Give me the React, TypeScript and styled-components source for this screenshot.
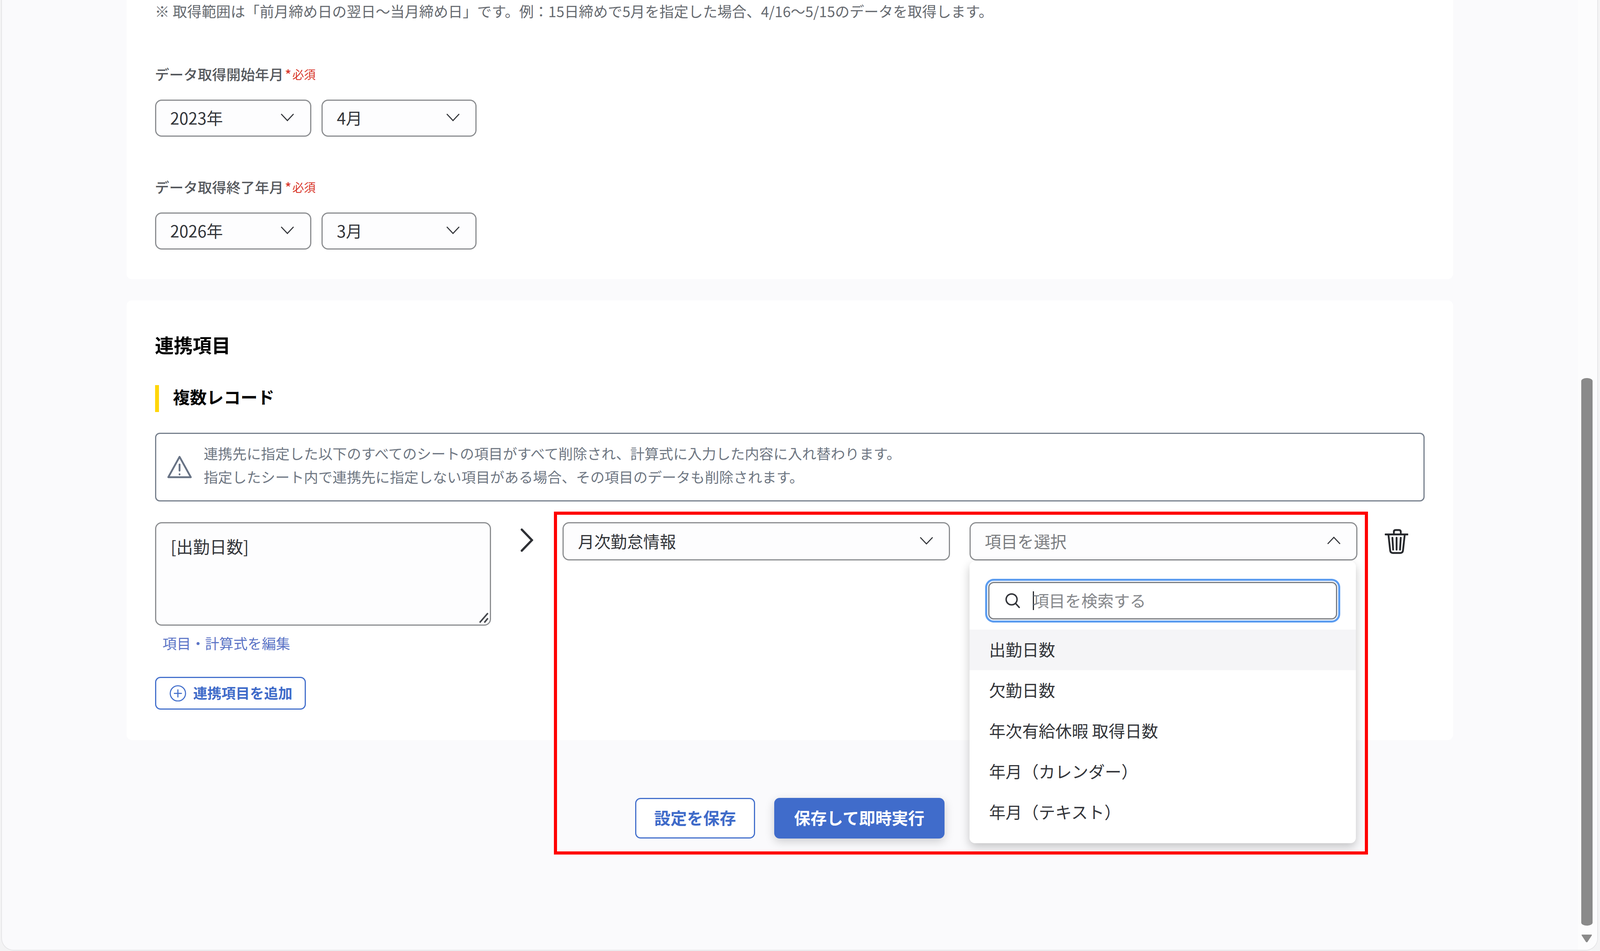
import React from 'react'
import styled, { createGlobalStyle } from 'styled-components'

// sizes measured on the 4400px wide design, kept fluid with the window width
const vw = (n: number) => `${(n / 44).toFixed(4)}vw`

const GlobalStyle = createGlobalStyle`
   * {
      box-sizing: border-box;
   }
   html, body {
      margin: 0;
      padding: 0;
      background-color: #f3f3f4;
   }
   body {
      font-family: "Noto Sans CJK JP", "Noto Sans", sans-serif;
   }
`

const Screen = styled.div`
   position: relative;
   width: 100vw;
   height: 2435px;
   overflow: hidden;
   padding: 0 ${vw(8)} 3px ${vw(5)};
`
const Window = styled.div`
   position: relative;
   height: 100%;
   overflow: hidden;
   background-color: #fafafc;
   border-radius: 0 0 30px 30px;
   box-shadow: 0 0 0 2px #e6e6e8;
`
const Main = styled.main`
   width: ${vw(3648)};
   margin-left: ${vw(343)};
`
const Card = styled.section`
   background-color: #ffffff;
   padding: 0 ${vw(78)};
   border-radius: 0 0 14px 14px;
`
const RangeCard = styled(Card)`
   padding-bottom: 76px;
`
const FieldCard = styled(Card)`
   margin-top: 54px;
   padding-top: 86px;
   padding-bottom: 78px;
   border-radius: 14px;
`
const Note = styled.p`
   margin: 0;
   padding-bottom: 6px;
   font-size: ${vw(39.9)};
   line-height: 56px;
   white-space: nowrap;
   color: #666a70;
`
const Field = styled.div<{ $top: number }>`
   margin-top: ${p => p.$top}px;
`
const Label = styled.div`
   display: flex;
   align-items: center;
   height: 60px;
   margin-bottom: 34px;
   padding-bottom: 4px;
   font-size: ${vw(39.3)};
   font-weight: 500;
   color: #55585d;
`
const Star = styled.span`
   margin-left: ${vw(4)};
   font-size: ${vw(36)};
   color: #d9382c;
`
const Required = styled.span`
   margin-left: ${vw(3)};
   font-size: ${vw(32)};
   font-weight: 400;
   color: #d9382c;
`
const SelectRow = styled.div`
   display: flex;
   gap: ${vw(28)};
`
const SelectBox = styled.div<{ $w?: number; $h?: number; $muted?: boolean }>`
   display: flex;
   align-items: center;
   justify-content: space-between;
   width: ${p => (p.$w ? vw(p.$w) : '100%')};
   height: ${p => p.$h ?? 95}px;
   padding: 0 ${vw(43)} 4px ${vw(39)};
   background-color: #fdfdfe;
   border: 3px solid #8b8d90;
   border-radius: 17px;
   font-size: ${vw(45)};
   color: ${p => (p.$muted ? '#7a7c80' : '#33353a')};
`
const Chevron = styled.svg`
   flex: 0 0 auto;
   width: ${vw(38)};
   height: ${vw(22)};
   fill: none;
   stroke: #33353a;
   stroke-width: 3;
`
const Title = styled.h2`
   margin: 0;
   font-size: ${vw(52)};
   line-height: 54px;
   padding-bottom: 6px;
   font-weight: 700;
   color: #000000;
`
const SubTitle = styled.h3`
   display: flex;
   align-items: center;
   height: 69px;
   margin: 71px 0 0;
   padding: 0 0 12px ${vw(39)};
   border-left: ${vw(11)} solid #ffd60a;
   font-size: ${vw(46.5)};
   font-weight: 700;
   color: #000000;
`
const Alert = styled.div`
   display: flex;
   align-items: center;
   height: 176px;
   margin-top: 53px;
   padding-left: ${vw(31)};
   border: 3px solid #767f8c;
   border-radius: 12px;
   gap: ${vw(32)};
`
const AlertIcon = styled.svg`
   flex: 0 0 auto;
   width: ${vw(68)};
   height: ${vw(64)};
   fill: none;
   stroke: #687385;
   stroke-width: 5;
   stroke-linejoin: round;
   stroke-linecap: round;
`
const AlertText = styled.div`
   padding-bottom: 12px;
   font-size: ${vw(39.4)};
   line-height: 60px;
   color: #6f7783;
`
const Mapping = styled.div`
   display: flex;
   align-items: flex-start;
   margin-top: 53px;
`
const SourceCol = styled.div`
   flex: 0 0 ${vw(924)};
`
const Formula = styled.div`
   position: relative;
   height: 265px;
   padding: 28px ${vw(40)};
   background-color: #fdfdfe;
   border: 3px solid #8b8d90;
   border-radius: 17px;
   font-size: ${vw(46)};
   line-height: 60px;
   color: #33353a;
`
const Grip = styled.svg`
   position: absolute;
   right: 3px;
   bottom: 3px;
   width: 28px;
   height: 28px;
   fill: none;
   stroke: #44474c;
   stroke-width: 4;
`
const EditLink = styled.a`
   display: block;
   margin-top: 14px;
   padding-left: ${vw(21)};
   font-size: ${vw(39)};
   line-height: 60px;
   color: #5b74c6;
`
const AddButton = styled.button`
   display: flex;
   align-items: center;
   gap: ${vw(19)};
   width: ${vw(415)};
   height: 84px;
   margin-top: 57px;
   padding: 0 0 4px ${vw(37)};
   background-color: #ffffff;
   border: 3px solid #4470cc;
   border-radius: 14px;
   font-family: inherit;
   font-size: ${vw(39)};
   font-weight: 700;
   white-space: nowrap;
   color: #3f6bc9;
`
const PlusIcon = styled.svg`
   flex: 0 0 auto;
   width: ${vw(46)};
   height: ${vw(46)};
   margin-top: 4px;
   fill: none;
   stroke: #4470cc;
   stroke-width: 3;
`
const ArrowCol = styled.div`
   flex: 0 0 ${vw(197)};
   display: flex;
   justify-content: center;
   padding-top: 14px;
`
const ArrowIcon = styled.svg`
   width: ${vw(36)};
   height: 64px;
   fill: none;
   stroke: #2e3035;
   stroke-width: 6;
   stroke-linecap: round;
`
const Targets = styled.div`
   flex: 0 0 ${vw(2186)};
   display: grid;
   grid-template-columns: ${vw(1066)} ${vw(1067)};
   column-gap: ${vw(53)};
`
const DropWrap = styled.div`
   position: relative;
`
const Dropdown = styled.div`
   position: absolute;
   z-index: 2;
   top: calc(100% + 2px);
   left: 0;
   right: ${vw(4)};
   height: 722px;
   padding-top: 53px;
   background-color: #ffffff;
   border-radius: 14px;
   box-shadow: 0 10px 24px rgba(0, 0, 0, 0.22);
`
const SearchRing = styled.div`
   display: flex;
   align-items: center;
   height: 96px;
   margin: 0 ${vw(52)} 26px;
   padding-left: ${vw(42)};
   background-color: #ffffff;
   border: 3px solid #7c7e82;
   border-radius: 14px;
   box-shadow: 0 0 0 3px #eef4fd, 0 0 0 8px #5b9cf0;
`
const SearchIcon = styled.svg`
   flex: 0 0 auto;
   width: ${vw(44)};
   height: ${vw(44)};
   fill: none;
   stroke: #33353a;
   stroke-width: 4;
   stroke-linecap: round;
`
const Caret = styled.span`
   flex: 0 0 3px;
   height: 48px;
   margin: 0 -3px 0 ${vw(33)};
   background-color: #2a2c30;
`
const Placeholder = styled.span`
   padding-bottom: 4px;
   font-size: ${vw(44.5)};
   color: #85878b;
`
const Option = styled.div<{ $active?: boolean }>`
   display: flex;
   align-items: center;
   height: 104px;
   padding: 0 0 6px ${vw(54)};
   background-color: ${p => (p.$active ? '#f5f5f7' : 'transparent')};
   font-size: ${vw(45.5)};
   color: #33353a;
`
const TrashCol = styled.div`
   flex: 0 0 auto;
   margin-left: ${vw(75)};
   padding-top: 15px;
`
const TrashIcon = styled.svg`
   display: block;
   width: ${vw(65)};
   height: 69px;
   fill: none;
   stroke: #26282c;
   stroke-width: 5;
   stroke-linecap: round;
   stroke-linejoin: round;
`
const Footer = styled.div`
   display: flex;
   justify-content: center;
   gap: ${vw(53)};
   margin-top: 148px;
`
const FootButton = styled.button<{ $primary?: boolean }>`
   width: ${p => vw(p.$primary ? 468 : 329)};
   height: 104px;
   padding: 0 0 6px;
   background-color: ${p => (p.$primary ? '#406ccb' : '#ffffff')};
   border: 3px solid ${p => (p.$primary ? '#406ccb' : '#4470cc')};
   border-radius: 14px;
   box-shadow: ${p => (p.$primary ? '0 8px 24px rgba(0, 0, 0, 0.18)' : 'none')};
   font-family: inherit;
   font-size: ${vw(45)};
   font-weight: 700;
   white-space: nowrap;
   color: ${p => (p.$primary ? '#ffffff' : '#3f6bc9')};
`
const ScrollTrack = styled.div`
   position: absolute;
   top: 0;
   right: 0;
   bottom: 0;
   width: ${vw(52)};
   display: flex;
   flex-direction: column;
   align-items: center;
   padding: 968px ${vw(12)} 0 ${vw(8)};
   background-color: #fcfcfd;
`
const ScrollThumb = styled.div`
   flex: 0 0 1402px;
   width: ${vw(32)};
   background-color: #8a8a8a;
   border-radius: 50% / 8px;
`
const ScrollArrow = styled.svg`
   flex: 0 0 20px;
   width: ${vw(28)};
   margin-top: 23px;
   fill: #8a8a8a;
`
const RedFrame = styled.div`
   position: absolute;
   z-index: 5;
   left: ${vw(1523)};
   top: 1310px;
   width: ${vw(2239)};
   height: 878px;
   border: 8px solid #ff0000;
`

function DownIcon() {
   return (
      <Chevron viewBox="0 0 38 22">
         <polyline points="2,2 19,20 36,2" />
      </Chevron>
   )
}

function UpIcon() {
   return (
      <Chevron viewBox="0 0 38 22">
         <polyline points="2,20 19,2 36,20" />
      </Chevron>
   )
}

function YearMonth(props: { label: string; year: string; month: string; top: number }) {
   return (
      <Field $top={props.top}>
         <Label>
            {props.label}
            <Star>*</Star>
            <Required>必須</Required>
         </Label>
         <SelectRow>
            <SelectBox $w={430}>
               {props.year}
               <DownIcon />
            </SelectBox>
            <SelectBox $w={427}>
               {props.month}
               <DownIcon />
            </SelectBox>
         </SelectRow>
      </Field>
   )
}

const options = ['出勤日数', '欠勤日数', '年次有給休暇 取得日数', '年月（カレンダー）', '年月（テキスト）']

export default function App() {
   return (
      <Screen>
         <GlobalStyle />
         <Window>
            <Main>
               <RangeCard>
                  <Note>※ 取得範囲は「前月締め日の翌日〜当月締め日」です。例：15日締めで5月を指定した場合、4/16〜5/15のデータを取得します。</Note>
                  <YearMonth label="データ取得開始年月" year="2023年" month="4月" top={99} />
                  <YearMonth label="データ取得終了年月" year="2026年" month="3月" top={100} />
               </RangeCard>
               <FieldCard>
                  <Title>連携項目</Title>
                  <SubTitle>複数レコード</SubTitle>
                  <Alert>
                     <AlertIcon viewBox="0 0 68 64">
                        <path d="M34 4 L65 60 H3 Z" />
                        <path d="M34 25 V42" />
                        <path d="M34 52 V52.5" />
                     </AlertIcon>
                     <AlertText>
                        連携先に指定した以下のすべてのシートの項目がすべて削除され、計算式に入力した内容に入れ替わります。
                        <br />
                        指定したシート内で連携先に指定しない項目がある場合、その項目のデータも削除されます。
                     </AlertText>
                  </Alert>
                  <Mapping>
                     <SourceCol>
                        <Formula>
                           [出勤日数]
                           <Grip viewBox="0 0 28 28">
                              <path d="M26 2 L5 26" />
                              <path d="M26 15 L17 26" />
                           </Grip>
                        </Formula>
                        <EditLink>項目・計算式を編集</EditLink>
                        <AddButton>
                           <PlusIcon viewBox="0 0 46 46">
                              <circle cx="23" cy="23" r="21" />
                              <path d="M23 12 V34 M12 23 H34" />
                           </PlusIcon>
                           連携項目を追加
                        </AddButton>
                     </SourceCol>
                     <ArrowCol>
                        <ArrowIcon viewBox="0 0 36 64">
                           <polyline points="4,3 32,32 4,61" />
                        </ArrowIcon>
                     </ArrowCol>
                     <Targets>
                        <SelectBox $h={98}>
                           月次勤怠情報
                           <DownIcon />
                        </SelectBox>
                        <DropWrap>
                           <SelectBox $h={98} $muted>
                              項目を選択
                              <UpIcon />
                           </SelectBox>
                           <Dropdown>
                              <SearchRing>
                                 <SearchIcon viewBox="0 0 44 44">
                                    <circle cx="19" cy="18" r="15" />
                                    <path d="M30 29 L40 40" />
                                 </SearchIcon>
                                 <Caret />
                                 <Placeholder>項目を検索する</Placeholder>
                              </SearchRing>
                              {options.map((o, i) => (
                                 <Option key={o} $active={i === 0}>{o}</Option>
                              ))}
                           </Dropdown>
                        </DropWrap>
                     </Targets>
                     <TrashCol>
                        <TrashIcon viewBox="0 0 65 69">
                           <path d="M2 15 H63" />
                           <path d="M25 15 V8 Q25 3 30 3 H39 Q44 3 44 8 V15" />
                           <path d="M10 15 L15 60 Q16 66 22 66 H43 Q49 66 50 60 L55 15" />
                           <path d="M21 24 L23 57 M32.5 24 V57 M44 24 L42 57" />
                        </TrashIcon>
                     </TrashCol>
                  </Mapping>
               </FieldCard>
               <Footer>
                  <FootButton>設定を保存</FootButton>
                  <FootButton $primary>保存して即時実行</FootButton>
               </Footer>
            </Main>
            <ScrollTrack>
               <ScrollThumb />
               <ScrollArrow viewBox="0 0 28 20" preserveAspectRatio="none">
                  <path d="M0 0 H28 V2 L16 19 Q14 20 12 19 L0 2 Z" />
               </ScrollArrow>
            </ScrollTrack>
         </Window>
         <RedFrame />
      </Screen>
   )
}
